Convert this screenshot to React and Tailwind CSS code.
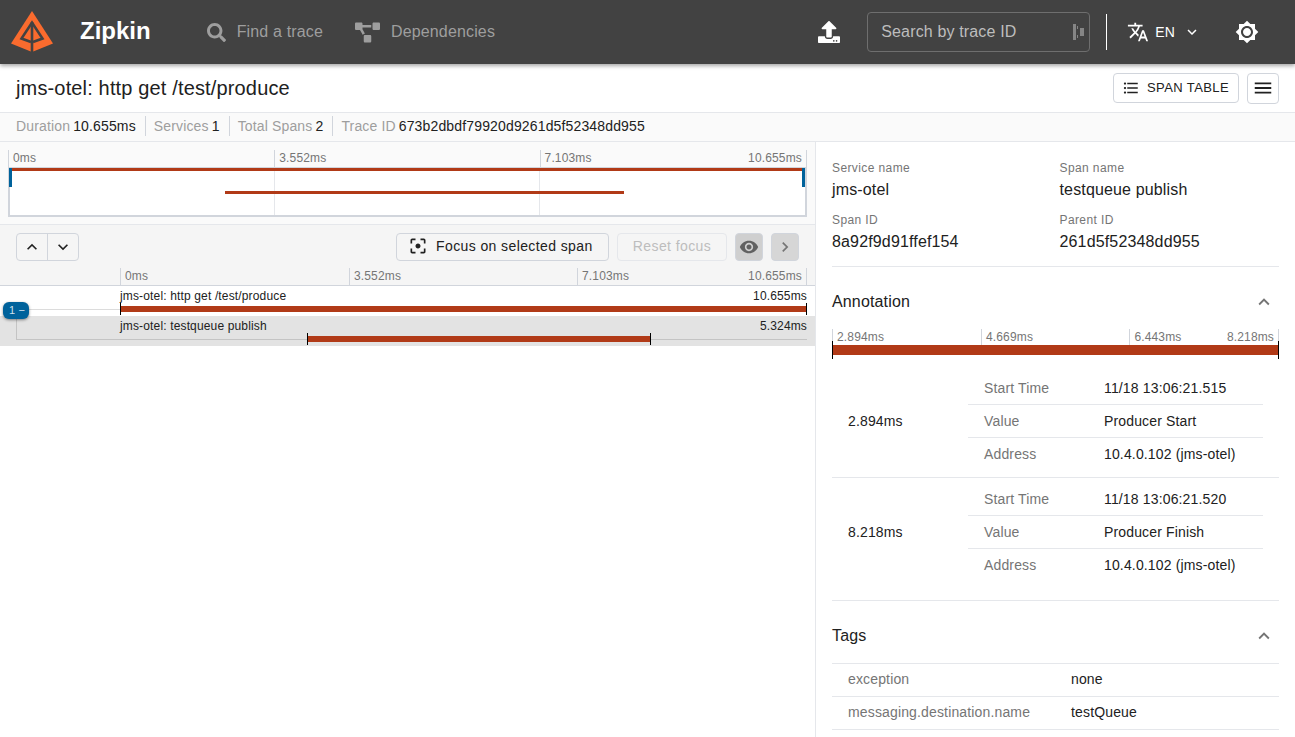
import React from 'react';
import { FaSearch, FaProjectDiagram, FaUpload } from 'react-icons/fa';
import {
  MdTranslate,
  MdKeyboardArrowDown,
  MdKeyboardArrowUp,
  MdKeyboardArrowRight,
  MdBrightness7,
  MdFormatListBulleted,
  MdMenu,
  MdFilterCenterFocus,
  MdVisibility,
  MdExpandLess,
} from 'react-icons/md';

function Logo() {
  return (
    <svg width="43" height="42" viewBox="0 0 43 42" className="shrink-0">
      <path d="M21 0 L42 32.5 L21 41 L0 32.5 Z" fill="#fa6b2e" />
      <path d="M20 31 L10.5 27.5 L21 11.5 L31.5 27.5 L22 31" fill="none" stroke="#424242" strokeWidth="2.6" />
      <path d="M21 11 V41" fill="none" stroke="#424242" strokeWidth="2.6" />
    </svg>
  );
}

function Stat({ label, value, last }) {
  return (
    <div className={`flex items-center gap-[3px] h-5 ${last ? '' : 'border-r border-gray-300 pr-[9px] mr-2'}`}>
      <span className="text-[#9e9e9e]">{label}</span>
      <span className="text-[#212121]">{value}</span>
    </div>
  );
}

function TickHeader({ labels }) {
  return (
    <div className="grid w-full h-full grid-cols-[33.33%_33.2%_1fr]">
      <div className="border-l border-gray-300 pl-1 text-xs text-[#757575] leading-[17px]">{labels[0]}</div>
      <div className="border-l border-gray-300 pl-1 text-xs text-[#757575] leading-[17px]">{labels[1]}</div>
      <div className="border-l border-r border-gray-300 px-1 text-xs text-[#757575] leading-[17px] flex justify-between">
        <span>{labels[2]}</span>
        <span>{labels[3]}</span>
      </div>
    </div>
  );
}

function SpanRow({ name, duration, left, width, selected }) {
  return (
    <div className={`h-[30px] pl-[120px] pr-2 ${selected ? 'bg-[#e3e3e3]' : 'bg-white'}`}>
      <div className="flex justify-between text-xs text-[#212121] leading-4 pt-[2px] h-[19px]">
        <span>{name}</span>
        <span>{duration}</span>
      </div>
      <div className="relative h-[11px]">
        <div className="absolute left-0 right-0 top-[4px] h-px bg-[#c4c4c4]" />
        <div className="absolute top-[1px] h-[6px] bg-[#b13a17]" style={{ left: `${left}%`, width: `${width}%` }} />
        <div className="absolute w-px -top-[2px] h-3 bg-black" style={{ left: `${left}%` }} />
        <div className="absolute w-px -top-[2px] h-3 bg-black" style={{ left: `calc(${left + width}% - 1px)` }} />
      </div>
    </div>
  );
}

function Field({ label, value }) {
  return (
    <div>
      <div className="text-xs tracking-[0.4px] text-[#757575] leading-[19px]">{label}</div>
      <div className="text-base text-[#212121] leading-6">{value}</div>
    </div>
  );
}

function AnnotationRow({ time, start, value, address, height }) {
  return (
    <div className={`flex items-start border-b border-gray-200 pt-[4.5px] ${height}`}>
      <div className="w-[136px] h-[99px] flex items-center pl-4 text-sm text-[#212121]">{time}</div>
      <div className="w-[295px] text-sm">
        <div className="flex h-[33px] items-center border-b border-gray-200 pl-4">
          <span className="w-[120px] text-[#757575]">Start Time</span>
          <span className="text-[#212121]">{start}</span>
        </div>
        <div className="flex h-[33px] items-center border-b border-gray-200 pl-4">
          <span className="w-[120px] text-[#757575]">Value</span>
          <span className="text-[#212121]">{value}</span>
        </div>
        <div className="flex h-[33px] items-center pl-4">
          <span className="w-[120px] text-[#757575]">Address</span>
          <span className="text-[#212121]">{address}</span>
        </div>
      </div>
    </div>
  );
}

function TagRow({ label, value }) {
  return (
    <div className="flex h-[33px] items-center border-b border-gray-200 pl-4 pb-[2px] text-sm">
      <span className="w-[223px] text-[#757575]">{label}</span>
      <span className="text-[#212121]">{value}</span>
    </div>
  );
}

export default function App() {
  return (
    <div className="h-[737px] overflow-hidden bg-white flex flex-col tracking-[0.15px] font-['Liberation_Sans',Arial,sans-serif]">
      {/* Header */}
      <header className="relative z-10 h-16 shrink-0 bg-[#424242] flex items-center shadow-[0_2px_4px_rgba(0,0,0,0.35)] pl-[11px] pr-[36px]">
        <Logo />
        <span className="ml-[26px] pb-[2px] text-2xl font-bold tracking-normal text-white">Zipkin</span>
        <div className="ml-[56px] flex items-center text-base text-[#9e9e9e]">
          <FaSearch className="text-[19px]" />
          <span className="ml-[11px]">Find a trace</span>
        </div>
        <div className="ml-[32px] flex items-center text-base text-[#9e9e9e]">
          <FaProjectDiagram className="text-[25px]" />
          <span className="ml-[11px]">Dependencies</span>
        </div>
        <div className="ml-auto flex items-center text-white">
          <FaUpload className="text-[22px]" />
          <div className="ml-[27px] w-[223px] h-10 rounded border border-[#6e6e6e] flex items-center justify-between pl-[13px] pr-[4px]">
            <span className="text-base text-[#bdbdbd]">Search by trace ID</span>
            <svg width="12" height="18" viewBox="0 0 12 18" fill="#858585">
              <rect x="0" y="1" width="3" height="16" />
              <rect x="4" y="3" width="1" height="3" />
              <rect x="4" y="12" width="1" height="3" />
              <rect x="7" y="5" width="4" height="8" />
            </svg>
          </div>
          <div className="ml-4 w-px h-9 bg-white" />
          <MdTranslate className="ml-[20px] text-[22px]" />
          <span className="ml-[6px] text-sm">EN</span>
          <MdKeyboardArrowDown className="ml-[8px] text-lg" />
          <MdBrightness7 className="ml-[34px] text-2xl" />
        </div>
      </header>

      {/* Title */}
      <div className="h-[49px] shrink-0 flex items-center border-b border-gray-200 pl-4 pr-4">
        <h1 className="text-xl text-[#212121]">jms-otel: http get /test/produce</h1>
        <button className="ml-auto w-[126px] h-[30px] rounded border border-gray-300 flex items-center gap-[7px] pl-2 text-[13px] tracking-[0.4px] text-[#212121]">
          <MdFormatListBulleted className="text-lg" />
          SPAN TABLE
        </button>
        <button className="ml-2 w-8 h-[31px] rounded border border-gray-300 flex items-center justify-center text-[#212121]">
          <MdMenu className="text-[22px]" />
        </button>
      </div>

      {/* Stats */}
      <div className="h-[29px] shrink-0 flex items-center bg-[#fafafa] border-b border-gray-200 pl-4 pb-[2px] text-sm">
        <Stat label="Duration" value="10.655ms" />
        <Stat label="Services" value="1" />
        <Stat label="Total Spans" value="2" />
        <Stat label="Trace ID" value="673b2dbdf79920d9261d5f52348dd955" last />
      </div>

      <div className="flex flex-1 min-h-0">
        {/* Left column */}
        <div className="w-[816px] shrink-0 border-r border-gray-200 flex flex-col">
          <div className="h-[83px] shrink-0 bg-[#fafafa] border-b border-gray-200 pl-2 pr-2 pt-2">
            <div className="h-[17px]">
              <TickHeader labels={['0ms', '3.552ms', '7.103ms', '10.655ms']} />
            </div>
            <div className="relative h-[50px] bg-white border-2 border-t border-gray-300">
              <div className="absolute left-[33.2%] top-0 bottom-0 w-px bg-gray-200" />
              <div className="absolute left-[66.6%] top-0 bottom-0 w-px bg-gray-200" />
              <div className="absolute left-0 right-[3px] top-0 h-[3px] bg-[#b13a17]" />
              <div className="absolute left-[27.04%] w-[50.2%] top-[23px] h-[3px] bg-[#b13a17]" />
              <div className="absolute -left-px top-0 w-[3px] h-[19px] bg-[#00629b]" />
              <div className="absolute right-0 top-0 w-[3px] h-[19px] bg-[#00629b]" />
            </div>
          </div>

          <div className="h-[43px] shrink-0 bg-[#f5f5f5] flex items-center pl-4 pr-[16px]">
            <div className="flex h-7 w-[63px] rounded border border-gray-300 text-[#212121]">
              <div className="flex-1 flex items-center justify-center border-r border-gray-300">
                <MdKeyboardArrowUp className="text-xl" />
              </div>
              <div className="flex-1 flex items-center justify-center">
                <MdKeyboardArrowDown className="text-xl" />
              </div>
            </div>
            <button className="ml-auto h-7 w-[213px] rounded border border-gray-300 flex items-center gap-2 pl-[11px] pb-px text-sm tracking-[0.4px] text-[#212121]">
              <MdFilterCenterFocus className="text-xl shrink-0" />
              Focus on selected span
            </button>
            <button className="ml-2 h-7 w-[110px] rounded border border-gray-200 pb-px text-sm tracking-[0.4px] text-[#bdbdbd]">Reset focus</button>
            <button className="ml-2 h-7 w-7 rounded bg-[#cfcfcf] border border-gray-300 flex items-center justify-center text-[#616161]">
              <MdVisibility className="text-xl" />
            </button>
            <button className="ml-2 h-7 w-7 rounded bg-[#d6d6d6] border border-gray-300 flex items-center justify-center text-[#757575]">
              <MdKeyboardArrowRight className="text-xl" />
            </button>
          </div>

          <div className="h-[18px] shrink-0 bg-[#f5f5f5] border-b border-gray-300 pl-[120px] pr-2">
            <TickHeader labels={['0ms', '3.552ms', '7.103ms', '10.655ms']} />
          </div>

          <div className="relative">
            <SpanRow name="jms-otel: http get /test/produce" duration="10.655ms" left={0} width={100} />
            <SpanRow name="jms-otel: testqueue publish" duration="5.324ms" left={27.2} width={50.15} selected />
            {/* tree connectors */}
            <div className="absolute left-[29px] top-[23px] w-[91px] h-px bg-[#dcdcdc]" />
            <div className="absolute left-[16px] top-[30px] w-[104px] h-[24px] border-l border-b border-[#c4c4c4]" />
            <div className="absolute left-[3px] top-[16px] w-[26px] h-[17px] rounded-md bg-[#00629b] text-[#cfe0ec] text-[11px] leading-[17px] pl-[6px] shadow-[0_1px_3px_rgba(0,0,0,0.45)]">1 −</div>
          </div>
        </div>

        {/* Right column */}
        <div className="flex-1 min-w-0 px-4 overflow-hidden">
          <div className="grid grid-cols-[227.5px_1fr] gap-y-[9px] pt-[17px] pb-[12px] border-b border-gray-200">
            <Field label="Service name" value="jms-otel" />
            <Field label="Span name" value="testqueue publish" />
            <Field label="Span ID" value="8a92f9d91ffef154" />
            <Field label="Parent ID" value="261d5f52348dd955" />
          </div>

          <div className="flex items-center justify-between h-[70px] pr-1">
            <span className="text-base text-[#212121]">Annotation</span>
            <MdExpandLess className="text-[22px] text-[#757575]" />
          </div>

          <div className="-mt-[8px] h-[16px]">
            <TickHeader labels={['2.894ms', '4.669ms', '6.443ms', '8.218ms']} />
          </div>
          <div className="relative h-[10px] bg-[#b13a17] mb-[12px]">
            <div className="absolute left-0 -top-[4px] w-px h-[18px] bg-black" />
            <div className="absolute right-0 -top-[4px] w-px h-[18px] bg-black" />
          </div>

          <AnnotationRow time="2.894ms" start="11/18 13:06:21.515" value="Producer Start" address="10.4.0.102 (jms-otel)" height="h-[111px]" />
          <AnnotationRow time="8.218ms" start="11/18 13:06:21.520" value="Producer Finish" address="10.4.0.102 (jms-otel)" height="h-[123px]" />

          <div className="flex items-center justify-between h-[63px] pt-[8px] pr-1 border-b border-gray-200">
            <span className="text-base text-[#212121]">Tags</span>
            <MdExpandLess className="text-[22px] text-[#757575]" />
          </div>
          <TagRow label="exception" value="none" />
          <TagRow label="messaging.destination.name" value="testQueue" />
        </div>
      </div>
    </div>
  );
}
